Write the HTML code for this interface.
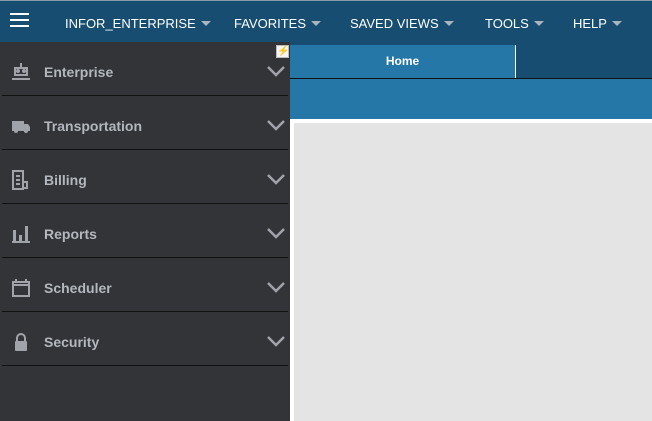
<!DOCTYPE html>
<html><head><style>
*{margin:0;padding:0;box-sizing:border-box}
body{width:652px;height:421px;overflow:hidden;position:relative;background:#333438;font-family:"Liberation Sans",sans-serif}
#top{position:absolute;left:0;top:0;width:652px;height:44px;background:#164d71;border-top:1px solid #8a9aa8}
.m{position:absolute;top:15px;color:#fff;font-size:13px}
.m i{display:inline-block;width:0;height:0;border-left:5px solid transparent;border-right:5px solid transparent;border-top:5px solid #a9b4be;margin-left:5px;vertical-align:2px}
#side{position:absolute;left:0;top:42px;width:290px;height:379px;background:#333438}
.it{position:absolute;left:0;width:290px;height:54px}
.it .l{position:absolute;left:2px;right:2px;bottom:0;height:1px;background:#111}
.it span{position:absolute;left:44px;top:22px;color:#b3b7be;font-weight:bold;font-size:14px}
.it svg.ic{position:absolute;left:11px;top:20px}
.it svg.ch{position:absolute;left:266px;top:23px}
</style></head><body>
<div id="top">
<div style="position:absolute;left:10px;top:12px;width:19px;height:14px;border-top:2px solid #fff;border-bottom:2px solid #fff"><div style="margin-top:4px;height:2px;background:#fff"></div></div>
<div class="m" style="left:65px">INFOR_ENTERPRISE<i></i></div>
<div class="m" style="left:234px">FAVORITES<i></i></div>
<div class="m" style="left:350px">SAVED VIEWS<i></i></div>
<div class="m" style="left:485px">TOOLS<i></i></div>
<div class="m" style="left:573px">HELP<i></i></div>
</div>
<div id="side">
<div class="it" style="top:0"><svg class="ic" width="20" height="20" viewBox="0 0 20 20" fill="none" stroke="#a0a3aa" stroke-width="2"><path d="M10 1v4M4 6h12v7H4zM1 17h18"/><circle cx="7" cy="9" r="1" fill="#a0a3aa"/><circle cx="13" cy="9" r="1" fill="#a0a3aa"/></svg><span>Enterprise</span><svg class="ch" width="20" height="12"><path d="M2 2l8 8 8-8" stroke="#a0a3aa" stroke-width="2.5" fill="none"/></svg><div class="l"></div></div>
<div class="it" style="top:54px"><svg class="ic" width="20" height="20" viewBox="0 0 20 20"><path d="M1 5h12v10H1zM13 8h4l2 3v4h-6z" fill="#a0a3aa"/><circle cx="5" cy="15" r="2" fill="#a0a3aa"/><circle cx="15" cy="15" r="2" fill="#a0a3aa"/></svg><span>Transportation</span><svg class="ch" width="20" height="12"><path d="M2 2l8 8 8-8" stroke="#a0a3aa" stroke-width="2.5" fill="none"/></svg><div class="l"></div></div>
<div class="it" style="top:108px"><svg class="ic" width="20" height="20" viewBox="0 0 20 20" fill="none" stroke="#a0a3aa" stroke-width="2"><path d="M2 1h10v18H2zM5 6h4M5 10h4M5 14h4M12 12h4v6h-4"/></svg><span>Billing</span><svg class="ch" width="20" height="12"><path d="M2 2l8 8 8-8" stroke="#a0a3aa" stroke-width="2.5" fill="none"/></svg><div class="l"></div></div>
<div class="it" style="top:162px"><svg class="ic" width="20" height="20" viewBox="0 0 20 20" fill="#a0a3aa"><rect x="2" y="6" width="3" height="12"/><rect x="8" y="11" width="3" height="7"/><rect x="14" y="2" width="3" height="16"/><rect x="1" y="17" width="18" height="2"/></svg><span>Reports</span><svg class="ch" width="20" height="12"><path d="M2 2l8 8 8-8" stroke="#a0a3aa" stroke-width="2.5" fill="none"/></svg><div class="l"></div></div>
<div class="it" style="top:216px"><svg class="ic" width="20" height="20" viewBox="0 0 20 20" fill="none" stroke="#a0a3aa" stroke-width="2"><rect x="2" y="4" width="16" height="14"/><path d="M2 7h16M5 1v3M15 1v3"/></svg><span>Scheduler</span><svg class="ch" width="20" height="12"><path d="M2 2l8 8 8-8" stroke="#a0a3aa" stroke-width="2.5" fill="none"/></svg><div class="l"></div></div>
<div class="it" style="top:270px"><svg class="ic" width="20" height="20" viewBox="0 0 20 20"><path d="M6 9V6a4 4 0 0 1 8 0v3" stroke="#a0a3aa" stroke-width="2" fill="none"/><rect x="4" y="9" width="12" height="10" rx="1" fill="#a0a3aa"/></svg><span>Security</span><svg class="ch" width="20" height="12"><path d="M2 2l8 8 8-8" stroke="#a0a3aa" stroke-width="2.5" fill="none"/></svg><div class="l"></div></div>
</div>
<div style="position:absolute;left:276px;top:45px;width:13px;height:13px;background:#f4f4f4;border:1px solid #bbb;color:#f0a000;font-size:10px;line-height:11px;text-align:center">⚡</div>
<div style="position:absolute;left:290px;top:44px;width:362px;height:34px;background:#164d71"></div>
<div style="position:absolute;left:290px;top:45px;width:226px;height:33px;background:#2577a8;border-right:1px solid #fff;color:#fff;font-weight:bold;font-size:12px;text-align:center;line-height:32px">Home</div>
<div style="position:absolute;left:290px;top:78px;width:362px;height:1px;background:#111"></div>
<div style="position:absolute;left:290px;top:79px;width:362px;height:40px;background:#2577a8"></div>
<div style="position:absolute;left:290px;top:119px;width:362px;height:302px;background:#fff"></div>
<div style="position:absolute;left:294px;top:123px;width:358px;height:298px;background:#e4e4e4"></div>
</body></html>
